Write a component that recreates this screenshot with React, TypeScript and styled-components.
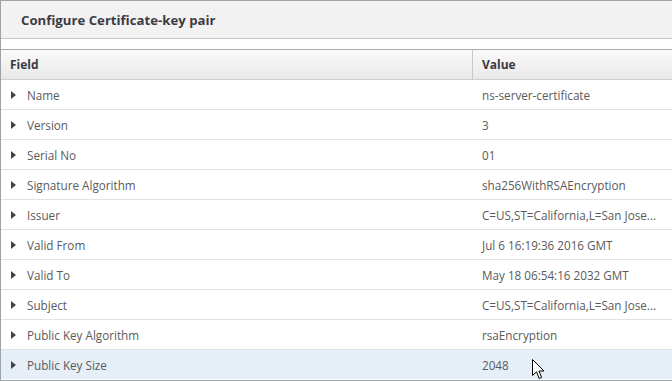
import React from "react";
import styled, { createGlobalStyle } from "styled-components";

const Global = createGlobalStyle`
  html, body { margin: 0; padding: 0; background: #ffffff; }
  body { font-family: "Open Sans", "Noto Sans", sans-serif; }
`;

const Frame = styled.div`
  position: relative;
  width: 672px;
  height: 381px;
  box-sizing: border-box;
  border-top: 1px solid #9ea3a8;
  border-left: 1px solid #9ea3a8;
  border-bottom: 1px solid #9ea3a8;
  background: #fff;
  overflow: hidden;
`;

const TitleBar = styled.div`
  height: 37px;
  background: #f2f2f2;
  border-bottom: 1px solid #c6c6c6;
  display: flex;
  align-items: center;
  padding-left: 20px;
  font-size: 13.2px;
  font-weight: 700;
  color: #3c3c44;
`;

const Spacer = styled.div`
  height: 10px;
  border-bottom: 1px solid #a9a9a9;
`;

const Grid = styled.div`
  display: grid;
  grid-template-columns: 471px 1fr;
`;

const HeadCell = styled.div<{ $divider?: boolean }>`
  height: 29px;
  display: flex;
  align-items: center;
  padding-left: 9px;
  background: linear-gradient(#fafafa, #e9e9e9);
  border-bottom: 1px solid #cfcfcf;
  border-left: ${(p) => (p.$divider ? "1px solid #c8c8c8" : "none")};
  font-size: 12px;
  font-weight: 700;
  color: #3a3a44;
`;

const Cell = styled.div<{ $selected?: boolean; $last?: boolean }>`
  height: 29px;
  display: flex;
  align-items: center;
  padding-left: 10px;
  background: ${(p) => (p.$selected ? "#e6eff7" : "#fff")};
  border-bottom: ${(p) => (p.$last ? "none" : "1px solid #e3e3e3")};
  font-size: 11.7px;
  color: #5a5a5a;
  white-space: nowrap;
`;

const Caret = styled.span`
  display: inline-block;
  width: 0;
  height: 0;
  border-top: 4.5px solid transparent;
  border-bottom: 4.5px solid transparent;
  border-left: 5px solid #444;
  margin-right: 11px;
`;

const Pointer = styled.svg`
  position: absolute;
  left: 531px;
  top: 358px;
`;

const rows: [string, string][] = [
  ["Name", "ns-server-certificate"],
  ["Version", "3"],
  ["Serial No", "01"],
  ["Signature Algorithm", "sha256WithRSAEncryption"],
  ["Issuer", "C=US,ST=California,L=San Jose..."],
  ["Valid From", "Jul 6 16:19:36 2016 GMT"],
  ["Valid To", "May 18 06:54:16 2032 GMT"],
  ["Subject", "C=US,ST=California,L=San Jose..."],
  ["Public Key Algorithm", "rsaEncryption"],
  ["Public Key Size", "2048"],
];

export default function App() {
  return (
    <Frame>
      <Global />
      <TitleBar>Configure Certificate-key pair</TitleBar>
      <Spacer />
      <Grid>
        <HeadCell>Field</HeadCell>
        <HeadCell $divider>Value</HeadCell>
        {rows.map(([f, v], i) => {
          const sel = i === rows.length - 1;
          return (
            <React.Fragment key={f}>
              <Cell $selected={sel} $last={sel}>
                <Caret />
                {f}
              </Cell>
              <Cell $selected={sel} $last={sel}>
                {v}
              </Cell>
            </React.Fragment>
          );
        })}
      </Grid>
      <Pointer width="13" height="21" viewBox="0 0 13 21">
        <path
          d="M0.5 0.5 L0.5 16.5 L4.5 12.8 L7.2 19.5 L9.6 18.5 L7 12 L12 12 Z"
          fill="#fff"
          stroke="#000"
          strokeWidth="1"
          strokeLinejoin="miter"
        />
      </Pointer>
    </Frame>
  );
}
